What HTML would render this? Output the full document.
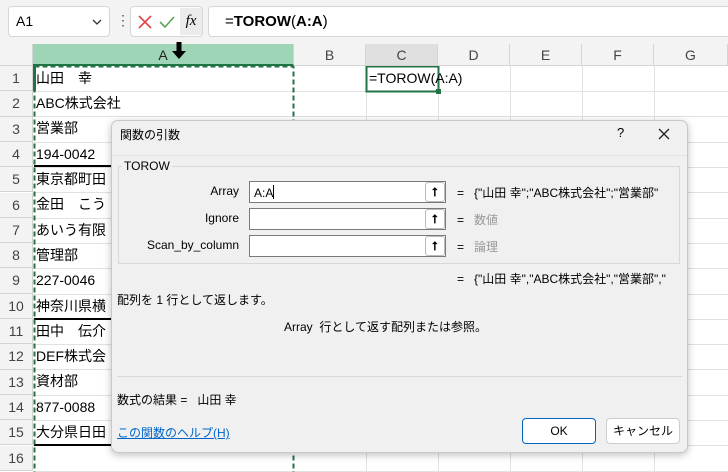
<!DOCTYPE html>
<html><head><meta charset="utf-8"><style>
*{margin:0;padding:0;box-sizing:border-box}
body{width:728px;height:472px;overflow:hidden;background:#fff;font-family:"Liberation Sans","Noto Sans CJK JP",sans-serif;position:relative}
.abs{position:absolute}
.top{left:0;top:0;width:728px;height:44px;background:#f3f3f3}
.box{background:#fff;border:1px solid #d6d6d6;border-radius:4px}
.hdr{top:44px;height:22px;background:#f3f3f3;border-bottom:1px solid #d4d4d4;color:#444;font-size:14px;text-align:center;line-height:22px;border-right:1px solid #d4d4d4}
.rh{left:0;width:33px;height:25.3px;background:#f3f3f3;border-bottom:1px solid #d4d4d4;border-right:1px solid #d4d4d4;color:#444;font-size:14px;text-align:center;line-height:25px}
.cell{left:33px;font-size:14px;color:#000;height:25px;line-height:25px;padding-left:3px;white-space:nowrap}
.dlg{left:111px;top:120px;width:577px;height:333px;background:#f0f0f0;border:1px solid #c8c8c8;border-radius:7px;box-shadow:0 2px 8px rgba(0,0,0,.25);font-size:12px;color:#000}
.inp{background:#fff;border:1px solid #7a7a7a;height:22px;width:197px}
.btn{width:20px;height:20px;border:1px solid #bbb;border-radius:3px;background:#fff;font-size:12px;text-align:center;line-height:18px;font-weight:bold}
.lbl{text-align:right;width:130px;font-size:12px}
.gray{color:#999}
</style></head><body>
<div class="abs top"></div>
<div class="abs box" style="left:8px;top:6px;width:102px;height:31px;font-size:14px;line-height:29px;padding-left:7px">A1<svg class="abs" style="right:7px;top:12px" width="10" height="6"><path d="M1 1L5 5L9 1" fill="none" stroke="#333" stroke-width="1.3"/></svg></div>
<div class="abs" style="left:116px;top:12px;font-size:14px;color:#555">&#8942;</div>
<div class="abs box" style="left:130px;top:6px;width:73px;height:31px">
<svg class="abs" style="left:6px;top:7px" width="40" height="16"><path d="M2 2L14 14M14 2L2 14" stroke="#e04646" stroke-width="1.6"/><path d="M23 8L28 13L37 3" fill="none" stroke="#5aa55a" stroke-width="1.6"/></svg>
<span class="abs" style="left:49px;top:1px;width:22px;height:27px;background:#ebebeb;font-family:'Liberation Serif',serif;font-style:italic;font-size:15px;line-height:27px;text-align:center">fx</span></div>
<div class="abs box" style="left:208px;top:6px;width:530px;height:31px;font-size:15px;line-height:29px;padding-left:16px">=<b>TOROW</b>(<b>A:A</b>)</div>
<div class="abs hdr" style="left:0;width:33px"></div>
<div class="abs hdr" style="left:33px;width:261px;background:#9fd5b7;color:#222;border-bottom:2px solid #217346">A</div>
<svg class="abs" style="left:171px;top:41px" width="16" height="20"><path d="M5.5 1H10.5V10H15L8 18L1 10H5.5Z" fill="#000"/></svg>
<div class="abs hdr" style="left:294px;width:72px">B</div>
<div class="abs hdr" style="left:366px;width:72px;background:#e0e0e0">C</div>
<div class="abs hdr" style="left:438px;width:72px">D</div>
<div class="abs hdr" style="left:510px;width:72px">E</div>
<div class="abs hdr" style="left:582px;width:72px">F</div>
<div class="abs hdr" style="left:654px;width:74px">G</div>
<svg class="abs" style="left:0;top:66px" width="728" height="406">
<g stroke="#e1e1e1" stroke-width="1">
<line x1="33" y1="25.5" x2="728" y2="25.5"/><line x1="33" y1="50.5" x2="728" y2="50.5"/><line x1="33" y1="76.5" x2="728" y2="76.5"/><line x1="33" y1="101.5" x2="728" y2="101.5"/><line x1="33" y1="126.5" x2="728" y2="126.5"/><line x1="33" y1="152.5" x2="728" y2="152.5"/><line x1="33" y1="177.5" x2="728" y2="177.5"/><line x1="33" y1="202.5" x2="728" y2="202.5"/><line x1="33" y1="228.5" x2="728" y2="228.5"/><line x1="33" y1="253.5" x2="728" y2="253.5"/><line x1="33" y1="278.5" x2="728" y2="278.5"/><line x1="33" y1="303.5" x2="728" y2="303.5"/><line x1="33" y1="329.5" x2="728" y2="329.5"/><line x1="33" y1="354.5" x2="728" y2="354.5"/><line x1="33" y1="379.5" x2="728" y2="379.5"/><line x1="33" y1="405.5" x2="728" y2="405.5"/>
<line x1="366.5" y1="0" x2="366.5" y2="406"/><line x1="438.5" y1="0" x2="438.5" y2="406"/><line x1="510.5" y1="0" x2="510.5" y2="406"/><line x1="582.5" y1="0" x2="582.5" y2="406"/><line x1="654.5" y1="0" x2="654.5" y2="406"/>
</g>
<g stroke="#000" stroke-width="2"><line x1="34" y1="100" x2="294" y2="100"/><line x1="34" y1="253" x2="294" y2="253"/><line x1="34" y1="379" x2="294" y2="379"/></g>
<rect x="34.5" y="0.5" width="259" height="410" fill="none" stroke="#217346" stroke-width="2" stroke-dasharray="5,3"/>
<rect x="366.5" y="0.5" width="72" height="25" fill="none" stroke="#217346" stroke-width="2"/>
<rect x="436" y="23" width="5" height="5" fill="#217346"/>
<rect x="33" y="0" width="3" height="25" fill="#217346"/>
</svg>
<div class="abs rh" style="top:66px">1</div><div class="abs rh" style="top:91.3px">2</div><div class="abs rh" style="top:116.6px">3</div><div class="abs rh" style="top:141.9px">4</div><div class="abs rh" style="top:167.2px">5</div><div class="abs rh" style="top:192.5px">6</div><div class="abs rh" style="top:217.8px">7</div><div class="abs rh" style="top:243.1px">8</div><div class="abs rh" style="top:268.4px">9</div><div class="abs rh" style="top:293.7px">10</div><div class="abs rh" style="top:319px">11</div><div class="abs rh" style="top:344.3px">12</div><div class="abs rh" style="top:369.6px">13</div><div class="abs rh" style="top:394.9px">14</div><div class="abs rh" style="top:420.2px">15</div><div class="abs rh" style="top:445.5px">16</div>
<div class="abs cell" style="top:66px">山田　幸</div>
<div class="abs cell" style="top:91px">ABC株式会社</div>
<div class="abs cell" style="top:116px">営業部</div>
<div class="abs cell" style="top:142px">194-0042</div>
<div class="abs cell" style="top:167px">東京都町田</div>
<div class="abs cell" style="top:192px">金田　こう</div>
<div class="abs cell" style="top:218px">あいう有限</div>
<div class="abs cell" style="top:243px">管理部</div>
<div class="abs cell" style="top:268px">227-0046</div>
<div class="abs cell" style="top:294px">神奈川県横</div>
<div class="abs cell" style="top:319px">田中　伝介</div>
<div class="abs cell" style="top:344px">DEF株式会</div>
<div class="abs cell" style="top:369px">資材部</div>
<div class="abs cell" style="top:395px">877-0088</div>
<div class="abs cell" style="top:420px">大分県日田</div>
<div class="abs" style="left:369px;top:66px;font-size:14px;line-height:25px">=TOROW(A:A)</div>

<div class="abs dlg">
<div class="abs" style="left:8px;top:5px;font-size:12px">関数の引数</div>
<div class="abs" style="left:505px;top:4px;font-size:13px">?</div>
<svg class="abs" style="left:546px;top:7px" width="12" height="12"><path d="M1 1L11 11M11 1L1 11" stroke="#222" stroke-width="1.3"/></svg>
<div class="abs" style="left:0;top:34px;width:575px;border-top:1px solid #e4e4e4"></div>
<div class="abs" style="left:6px;top:45px;width:562px;height:98px;border:1px solid #d8d8d8"></div>
<div class="abs" style="left:10px;top:38px;background:#f0f0f0;padding:0 2px">TOROW</div>
<div class="abs lbl" style="left:-3px;top:63px">Array</div>
<div class="abs lbl" style="left:-3px;top:90px">Ignore</div>
<div class="abs lbl" style="left:-3px;top:117px">Scan_by_column</div>
<div class="abs inp" style="left:137px;top:60px;padding:3px 4px">A:A<span style="display:inline-block;width:1px;height:14px;background:#000;vertical-align:-2px"></span></div>
<div class="abs inp" style="left:137px;top:87px"></div>
<div class="abs inp" style="left:137px;top:114px"></div>
<div class="abs btn" style="left:313px;top:61px">⭡</div>
<div class="abs btn" style="left:313px;top:88px">⭡</div>
<div class="abs btn" style="left:313px;top:115px">⭡</div>
<div class="abs" style="left:345px;top:63px">=&nbsp;&nbsp; {"山田 幸";"ABC株式会社";"営業部"</div>
<div class="abs gray" style="left:345px;top:90px"><span style="color:#000">=</span>&nbsp;&nbsp; 数値</div>
<div class="abs gray" style="left:345px;top:117px"><span style="color:#000">=</span>&nbsp;&nbsp; 論理</div>
<div class="abs" style="left:345px;top:149px">=&nbsp;&nbsp; {"山田 幸","ABC株式会社","営業部","</div>
<div class="abs" style="left:5px;top:170px">配列を 1 行として返します。</div>
<div class="abs" style="left:172px;top:197px">Array&nbsp;&nbsp;行として返す配列または参照。</div>
<div class="abs" style="left:5px;top:255px;width:565px;border-top:1px solid #d8d8d8"></div>
<div class="abs" style="left:5px;top:270px">数式の結果 =&nbsp;&nbsp; 山田 幸</div>
<div class="abs" style="left:5px;top:303px;color:#0066cc;text-decoration:underline">この関数のヘルプ(H)</div>
<div class="abs" style="left:410px;top:297px;width:74px;height:26px;background:#fff;border:1px solid #0067c0;border-radius:4px;text-align:center;line-height:24px">OK</div>
<div class="abs" style="left:494px;top:297px;width:74px;height:26px;background:#fff;border:1px solid #ccc;border-radius:4px;text-align:center;line-height:24px">キャンセル</div>
</div>
</body></html>
